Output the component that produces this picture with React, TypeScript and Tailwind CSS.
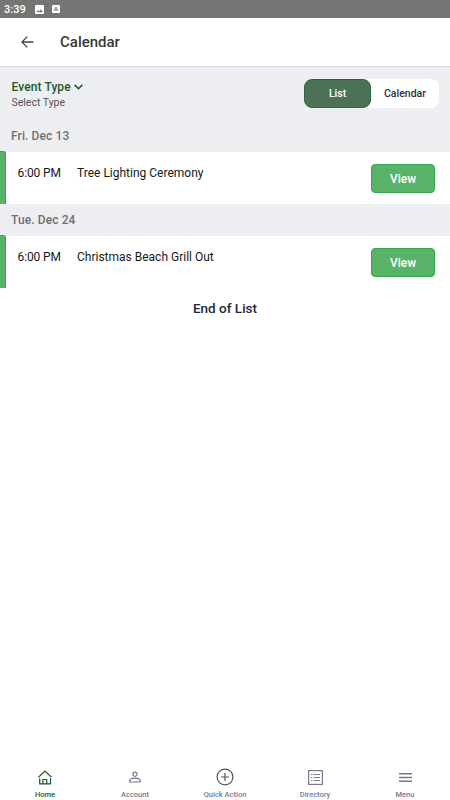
import React from 'react';

type CalendarEvent = {
  id: number;
  date: string;
  time: string;
  title: string;
};

const events: CalendarEvent[] = [
  { id: 1, date: 'Fri. Dec 13', time: '6:00 PM', title: 'Tree Lighting Ceremony' },
  { id: 2, date: 'Tue. Dec 24', time: '6:00 PM', title: 'Christmas Beach Grill Out' },
];

const StatusBar = () => (
  <div className="flex h-[18px] shrink-0 items-center bg-[#757575] pl-1 text-white">
    <span className="w-[31px] pt-px text-[11px] leading-[17px] font-medium">3:39</span>
    <svg width="9" height="9" viewBox="0 0 9 9" className="mr-2">
      <rect width="9" height="9" rx="1" fill="#fff" />
      <path d="M1.3 7.2 3 5l1.2 1.4L5.9 4.2l2 3z" fill="#757575" />
    </svg>
    <svg width="8" height="8" viewBox="0 0 8 8">
      <rect width="8" height="8" rx="1" fill="#fff" />
      <path d="M2.3 6 4 2l1.7 4M2.9 4.7h2.2" fill="none" stroke="#757575" strokeWidth="0.9" />
    </svg>
  </div>
);

const Header = () => (
  <header className="flex h-[49px] shrink-0 items-center border-b border-[#d5d6da] bg-white pl-[21px]">
    <svg width="13" height="12" viewBox="0 0 13 12" fill="none" stroke="#444" strokeWidth="1.3">
      <path d="M12.5 6H1M6.3 0.6 0.9 6l5.4 5.4" />
    </svg>
    <h1 className="ml-[26px] pt-px text-[15px] font-medium text-[#383838]">Calendar</h1>
  </header>
);

const FilterBar = () => (
  <div className="flex h-[53px] shrink-0 items-start justify-between bg-[#edeef2] pt-3 pr-[11px] pl-[11.5px]">
    <div>
      <div className="flex items-center gap-[3px] text-[12px] leading-4 font-medium tracking-[0.1px] text-[#1d5a2a]">
        Event Type
        <svg width="9" height="6" viewBox="0 0 9 6" fill="none" stroke="#1d5a2a" strokeWidth="1.6">
          <path d="M0.7 0.9 4.5 4.7 8.3 0.9" />
        </svg>
      </div>
      <div className="text-[10.5px] leading-[15px] text-[#555]">Select Type</div>
    </div>
    <div className="flex h-[29px] w-[135px] rounded-lg bg-white text-[10.5px] font-medium">
      <button className="w-[67px] rounded-lg border border-[#2d673c] bg-[#4d7157] pt-px text-white">List</button>
      <button className="flex-1 pt-px text-[#2b2d3f]">Calendar</button>
    </div>
  </div>
);

const EventRow: React.FC<{ event: CalendarEvent }> = ({ event }) => (
  <section>
    <h2 className="h-8 bg-[#edeef2] pl-[11px] text-[12px] leading-8 font-medium tracking-[0.1px] text-[#707070]">
      {event.date}
    </h2>
    <div className="flex h-[52px] items-start bg-white pr-[15px] text-[12px] text-[#171717]">
      <div className="-mt-px h-[53px] w-1.5 rounded-tr-[3px] border-t border-r border-[#37a650] bg-[#58b368]" />
      <span className="ml-[11.5px] w-[59.5px] pt-[13px] leading-4 tracking-[-0.1px]">{event.time}</span>
      <span className="flex-1 pt-[13px] leading-4">{event.title}</span>
      <button className="mt-3 h-[29px] w-16 rounded-[4px] border border-[#37a650] bg-[#58b368] text-[12px] font-medium text-white">
        View
      </button>
    </div>
  </section>
);

const NavItem: React.FC<{ label: string; active?: boolean; children: React.ReactNode }> = ({ label, active, children }) => (
  <div className={`flex flex-1 flex-col items-center ${active ? 'text-[#1d5a2a]' : 'text-[#777990]'}`}>
    <div className="flex h-[18px] items-center">{children}</div>
    <span className="mt-1 text-[7.5px] leading-[9px] font-medium">{label}</span>
  </div>
);

const BottomNav = () => (
  <nav className="mt-auto flex h-8 shrink-0">
    <NavItem label="Home" active>
      <svg width="14" height="15" viewBox="0 0 14 15" fill="none" stroke="currentColor" strokeWidth="1.2">
        <path d="M0.5 7.2 7 1l6.5 6.2M1.7 8.2v5.7h10.8V8.2M4.9 13.9V9.5h3.8v4.4" />
      </svg>
    </NavItem>
    <NavItem label="Account">
      <svg width="12" height="12" viewBox="0 0 12 12" fill="none" stroke="currentColor" strokeWidth="1.2">
        <circle cx="6" cy="3.2" r="2.1" />
        <path d="M0.8 11V9.6C0.8 8 3.8 7.2 6 7.2s5.2.8 5.2 2.4V11z" />
      </svg>
    </NavItem>
    <NavItem label="Quick Action">
      <svg width="18" height="18" viewBox="0 0 18 18" fill="none" stroke="#555" strokeWidth="1.2">
        <circle cx="9" cy="9" r="7.9" />
        <path d="M9 5v8M5 9h8" />
      </svg>
    </NavItem>
    <NavItem label="Directory">
      <svg width="15" height="15" viewBox="0 0 15 15" fill="none" stroke="currentColor">
        <rect x="0.6" y="0.6" width="13.8" height="13.8" strokeWidth="1.2" />
        <path d="M3 4.5h1.3M3 7.5h1.3M3 10.5h1.3M5.5 4.5H12M5.5 7.5H12M5.5 10.5H12" />
      </svg>
    </NavItem>
    <NavItem label="Menu">
      <svg width="13" height="9" viewBox="0 0 13 9" fill="none" stroke="currentColor" strokeWidth="1.4">
        <path d="M0 0.8h13M0 4.5h13M0 8.2h13" />
      </svg>
    </NavItem>
  </nav>
);

export default function App() {
  return (
    <div className="flex h-[800px] w-[450px] flex-col overflow-hidden bg-white font-[Roboto,sans-serif]">
      <StatusBar />
      <Header />
      <FilterBar />
      {events.map((event) => (
        <EventRow key={event.id} event={event} />
      ))}
      <div className="pt-[10px] text-center text-[13.5px] leading-5 font-medium text-[#252739]">End of List</div>
      <BottomNav />
    </div>
  );
}
